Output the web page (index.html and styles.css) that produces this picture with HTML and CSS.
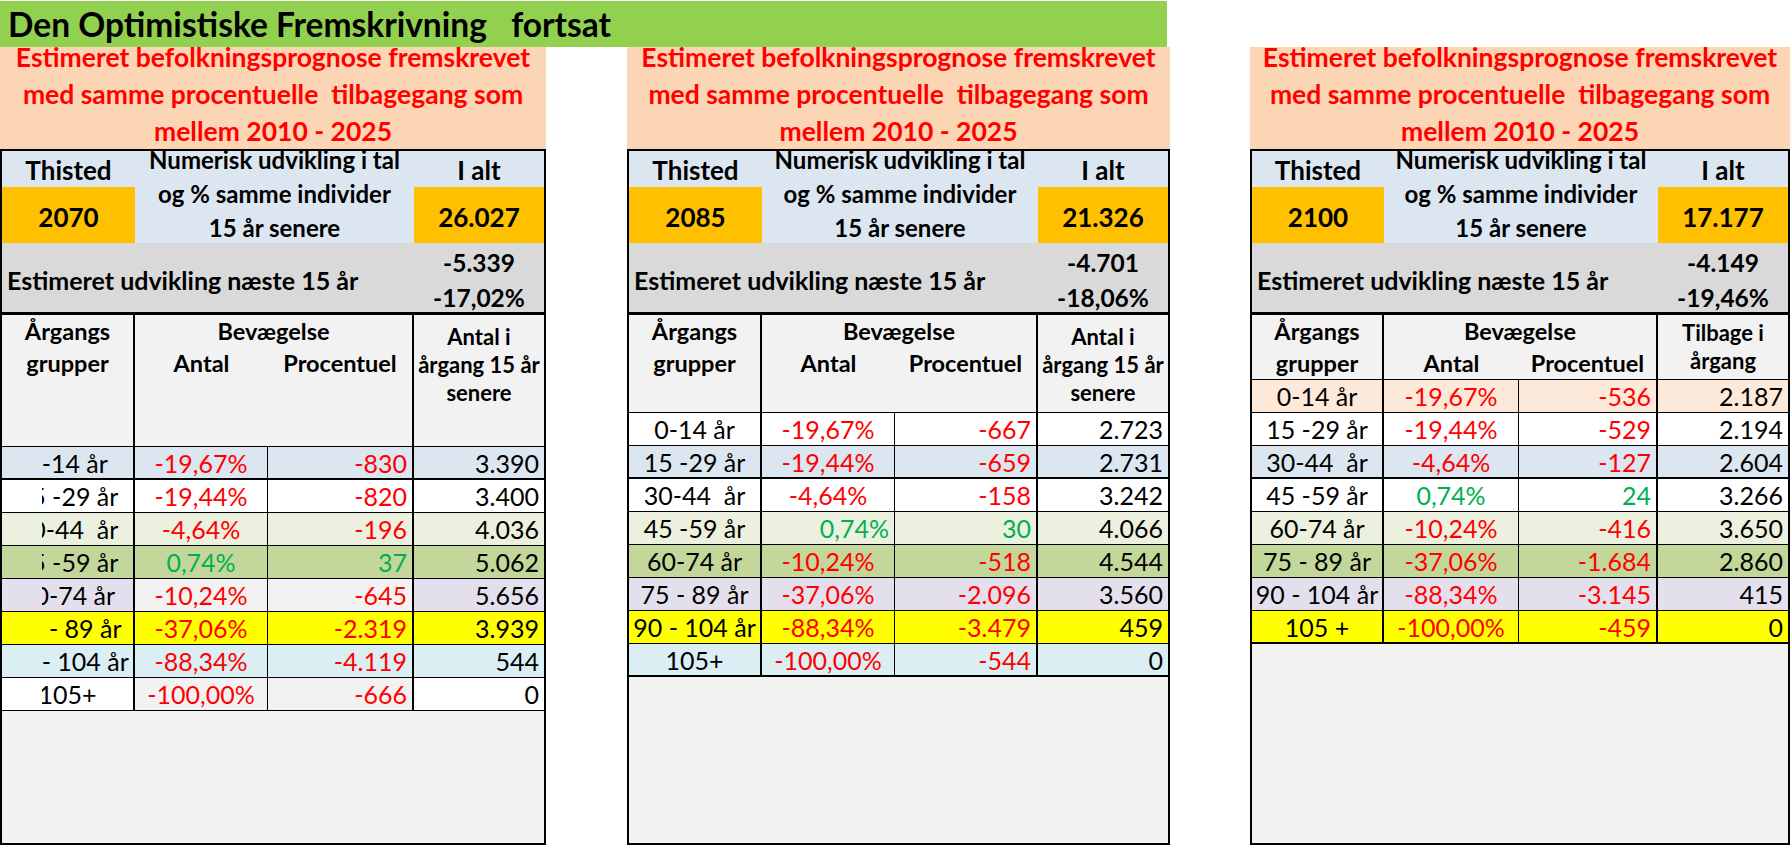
FILE: index.html
```html
<!DOCTYPE html>
<html lang="da">
<head>
<meta charset="utf-8">
<title>Den Optimistiske Fremskrivning fortsat</title>
<link rel="stylesheet" href="styles.css">
</head>
<body>
<div class="page">
  <div class="title">Den Optimistiske Fremskrivning   fortsat</div>
  <div class="panels">

    <section class="panel p1">
      <div class="banner"><p>Estimeret befolkningsprognose fremskrevet
med samme procentuelle  tilbagegang som
mellem 2010 - 2025</p></div>
      <div class="sheet">
        <div class="top">
          <div class="c thisted">Thisted</div>
          <div class="c numerisk"><p>Numerisk udvikling i tal<br>og % samme individer<br>15 år senere</p></div>
          <div class="c ialt">I alt</div>
          <div class="c year">2070</div>
          <div class="c total">26.027</div>
          <div class="c est">Estimeret udvikling næste 15 år</div>
          <div class="c estval"><p>-5.339<br>-17,02%</p></div>
        </div>
        <div class="head">
          <div class="h1">Årgangs<br>grupper</div>
          <div class="h2"><div class="bev">Bevægelse</div><div>Antal</div><div>Procentuel</div></div>
          <div class="h4">Antal i<br>årgang 15 år<br>senere</div>
        </div>
        <div class="row blue thick"><div class="g cut"><span>0-14 år</span></div><div class="neg">-19,67%</div><div class="neg">-830</div><div>3.390</div></div>
        <div class="row white"><div class="g cut"><span>15 -29 år</span></div><div class="neg">-19,44%</div><div class="neg">-820</div><div>3.400</div></div>
        <div class="row lgreen"><div class="g cut"><span>30-44  år</span></div><div class="neg">-4,64%</div><div class="neg">-196</div><div>4.036</div></div>
        <div class="row green"><div class="g cut"><span>45 -59 år</span></div><div class="pos">0,74%</div><div class="pos">37</div><div>5.062</div></div>
        <div class="row lav"><div class="g cut"><span>60-74 år</span></div><div class="neg grey">-10,24%</div><div class="neg grey">-645</div><div>5.656</div></div>
        <div class="row yellow"><div class="g cut"><span>75 - 89 år</span></div><div class="neg">-37,06%</div><div class="neg">-2.319</div><div>3.939</div></div>
        <div class="row cyan"><div class="g cut"><span>90 - 104 år</span></div><div class="neg">-88,34%</div><div class="neg">-4.119</div><div>544</div></div>
        <div class="row white"><div class="g cut"><span>105+</span></div><div class="neg grey">-100,00%</div><div class="neg grey">-666</div><div>0</div></div>
        <div class="fill"></div>
      </div>
    </section>

    <section class="panel p2">
      <div class="banner"><p>Estimeret befolkningsprognose fremskrevet
med samme procentuelle  tilbagegang som
mellem 2010 - 2025</p></div>
      <div class="sheet">
        <div class="top">
          <div class="c thisted">Thisted</div>
          <div class="c numerisk"><p>Numerisk udvikling i tal<br>og % samme individer<br>15 år senere</p></div>
          <div class="c ialt">I alt</div>
          <div class="c year">2085</div>
          <div class="c total">21.326</div>
          <div class="c est">Estimeret udvikling næste 15 år</div>
          <div class="c estval"><p>-4.701<br>-18,06%</p></div>
        </div>
        <div class="head">
          <div class="h1">Årgangs<br>grupper</div>
          <div class="h2"><div class="bev">Bevægelse</div><div>Antal</div><div>Procentuel</div></div>
          <div class="h4">Antal i<br>årgang 15 år<br>senere</div>
        </div>
        <div class="row white"><div class="g">0-14 år</div><div class="neg">-19,67%</div><div class="neg">-667</div><div>2.723</div></div>
        <div class="row blue thick"><div class="g">15 -29 år</div><div class="neg">-19,44%</div><div class="neg">-659</div><div>2.731</div></div>
        <div class="row white"><div class="g">30-44  år</div><div class="neg">-4,64%</div><div class="neg">-158</div><div>3.242</div></div>
        <div class="row lgreen"><div class="g">45 -59 år</div><div class="pos r">0,74%</div><div class="pos">30</div><div>4.066</div></div>
        <div class="row green"><div class="g">60-74 år</div><div class="neg">-10,24%</div><div class="neg">-518</div><div>4.544</div></div>
        <div class="row lav"><div class="g">75 - 89 år</div><div class="neg">-37,06%</div><div class="neg">-2.096</div><div>3.560</div></div>
        <div class="row yellow"><div class="g">90 - 104 år</div><div class="neg">-88,34%</div><div class="neg">-3.479</div><div>459</div></div>
        <div class="row cyan thick"><div class="g">105+</div><div class="neg">-100,00%</div><div class="neg">-544</div><div>0</div></div>
        <div class="fill"></div>
      </div>
    </section>

    <section class="panel p3">
      <div class="banner"><p>Estimeret befolkningsprognose fremskrevet
med samme procentuelle  tilbagegang som
mellem 2010 - 2025</p></div>
      <div class="sheet">
        <div class="top">
          <div class="c thisted">Thisted</div>
          <div class="c numerisk"><p>Numerisk udvikling i tal<br>og % samme individer<br>15 år senere</p></div>
          <div class="c ialt">I alt</div>
          <div class="c year">2100</div>
          <div class="c total">17.177</div>
          <div class="c est">Estimeret udvikling næste 15 år</div>
          <div class="c estval"><p>-4.149<br>-19,46%</p></div>
        </div>
        <div class="head">
          <div class="h1">Årgangs<br>grupper</div>
          <div class="h2"><div class="bev">Bevægelse</div><div>Antal</div><div>Procentuel</div></div>
          <div class="h4">Tilbage i<br>årgang</div>
        </div>
        <div class="row peach"><div class="g">0-14 år</div><div class="neg">-19,67%</div><div class="neg">-536</div><div>2.187</div></div>
        <div class="row white"><div class="g">15 -29 år</div><div class="neg">-19,44%</div><div class="neg">-529</div><div>2.194</div></div>
        <div class="row blue thick"><div class="g">30-44  år</div><div class="neg">-4,64%</div><div class="neg">-127</div><div>2.604</div></div>
        <div class="row white"><div class="g">45 -59 år</div><div class="pos">0,74%</div><div class="pos">24</div><div>3.266</div></div>
        <div class="row lgreen"><div class="g">60-74 år</div><div class="neg">-10,24%</div><div class="neg">-416</div><div>3.650</div></div>
        <div class="row green"><div class="g">75 - 89 år</div><div class="neg">-37,06%</div><div class="neg">-1.684</div><div>2.860</div></div>
        <div class="row lav"><div class="g">90 - 104 år</div><div class="neg">-88,34%</div><div class="neg">-3.145</div><div>415</div></div>
        <div class="row yellow thick"><div class="g">105 +</div><div class="neg">-100,00%</div><div class="neg">-459</div><div>0</div></div>
        <div class="fill"></div>
      </div>
    </section>

  </div>
</div>
</body>
</html>
```

FILE: styles.css
```css
* { box-sizing: border-box; margin: 0; padding: 0; }

body {
  margin: 0;
  width: 1791px;
  height: 846px;
  overflow: hidden;
  background: #ffffff;
  color: #000000;
  font-family: Lato, "Open Sans", "DejaVu Sans", sans-serif;
}

.page { padding-top: 1px; }

.title {
  width: 1167px;
  height: 46px;
  background: #92d050;
  font-weight: 700;
  font-size: 33.5px;
  line-height: 46px;
  padding-left: 8px;
  white-space: pre;
}

.panels { display: flex; align-items: flex-start; }

.panel {
  display: flex;
  flex-direction: column;
  height: 799px;
  --cols: var(--c1) var(--c2) var(--c3) 1fr;
}
.p1 { width: 546px; --c1: 133px; --c2: 133px; --c3: 146px; }
.p2 { width: 543px; margin-left: 81px; --c1: 133px; --c2: 133px; --c3: 143px; }
.p3 { width: 540px; margin-left: 80px; --c1: 132px; --c2: 135px; --c3: 139px; }

.banner {
  flex: none;
  height: 102px;
  background: #fcd5b4;
  color: #ff0000;
  font-weight: 700;
  font-size: 26.5px;
  text-align: center;
  white-space: pre;
}
.banner p { line-height: 37px; margin-top: -8px; }

.sheet {
  flex: 1;
  display: flex;
  flex-direction: column;
  border: 2px solid #000000;
  margin-bottom: 1px;
  background: #f2f2f2;
}

/* top block */
.top {
  flex: none;
  display: grid;
  grid-template-columns: var(--cols);
  grid-template-rows: 36px 56px 69px;
  border-bottom: 3px solid #000000;
  font-weight: 700;
  font-size: 26px;
}
.c {
  display: flex;
  align-items: center;
  justify-content: center;
  text-align: center;
  white-space: nowrap;
}
.thisted { grid-column: 1; grid-row: 1; background: #dce6f1; padding-top: 2px; }
.ialt { grid-column: 4; grid-row: 1; background: #dce6f1; padding-top: 2px; }
.numerisk {
  grid-column: 2 / 4;
  grid-row: 1 / 3;
  background: #dce6f1;
  font-size: 24px;
  line-height: 34px;
  padding-bottom: 7px;
}
.year { grid-column: 1; grid-row: 2; background: #ffc000; padding-top: 4px; }
.total { grid-column: 4; grid-row: 2; background: #ffc000; padding-top: 4px; }
.est {
  grid-column: 1 / 4;
  grid-row: 3;
  background: #d9d9d9;
  justify-content: flex-start;
  padding: 5px 0 0 5px;
  font-size: 25px;
}
.estval {
  grid-column: 4;
  grid-row: 3;
  background: #d9d9d9;
  line-height: 35px;
  padding-top: 5px;
  font-size: 24.5px;
}

/* column header */
.head {
  flex: none;
  display: grid;
  grid-template-columns: var(--cols);
  border-bottom: 1px solid #000000;
  font-weight: 700;
  font-size: 23.5px;
  line-height: 32px;
  text-align: center;
  white-space: nowrap;
}
.p1 .head { height: 132px; }
.p2 .head { height: 98px; }
.p3 .head { height: 65px; }
.h1 { grid-column: 1; border-right: 2px solid #000000; }
.h2 {
  grid-column: 2 / 4;
  display: grid;
  grid-template-columns: var(--c2) 1fr;
  align-content: start;
  border-right: 2px solid #000000;
}
.bev { grid-column: 1 / 3; }
.h4 { grid-column: 4; font-size: 22px; line-height: 28px; padding-top: 8px; }
.p3 .h4 { padding-top: 4px; }

/* data rows */
.row {
  flex: none;
  display: grid;
  grid-template-columns: var(--cols);
  height: 33px;
  border-bottom: 1px solid #000000;
  font-size: 25px;
  line-height: 32px;
}
.row.thick { border-bottom-width: 2px; }
.row > div { white-space: pre; overflow: hidden; padding: 0 5px; }
.row > div:nth-child(1) { text-align: center; border-right: 2px solid #000000; padding: 0; }
.row > div:nth-child(2) { text-align: center; border-right: 1px solid #000000; padding: 0; }
.row > div:nth-child(3) { text-align: right; border-right: 2px solid #000000; }
.row > div:nth-child(4) { text-align: right; }
.row > div.r { text-align: right; padding-right: 5px; }
.cut span { display: block; clip-path: inset(0 0 0 40px); }

.white { background: #ffffff; }
.blue { background: #dce6f1; }
.lgreen { background: #ebf1de; }
.green { background: #c4d79b; }
.lav { background: #e4dfec; }
.yellow { background: #ffff00; }
.cyan { background: #daeef3; }
.peach { background: #fde9d9; }
.row > div.grey { background: #f2f2f2; }

.neg { color: #ff0000; }
.pos { color: #00b050; }

.fill { flex: 1; background: #f2f2f2; }
```
